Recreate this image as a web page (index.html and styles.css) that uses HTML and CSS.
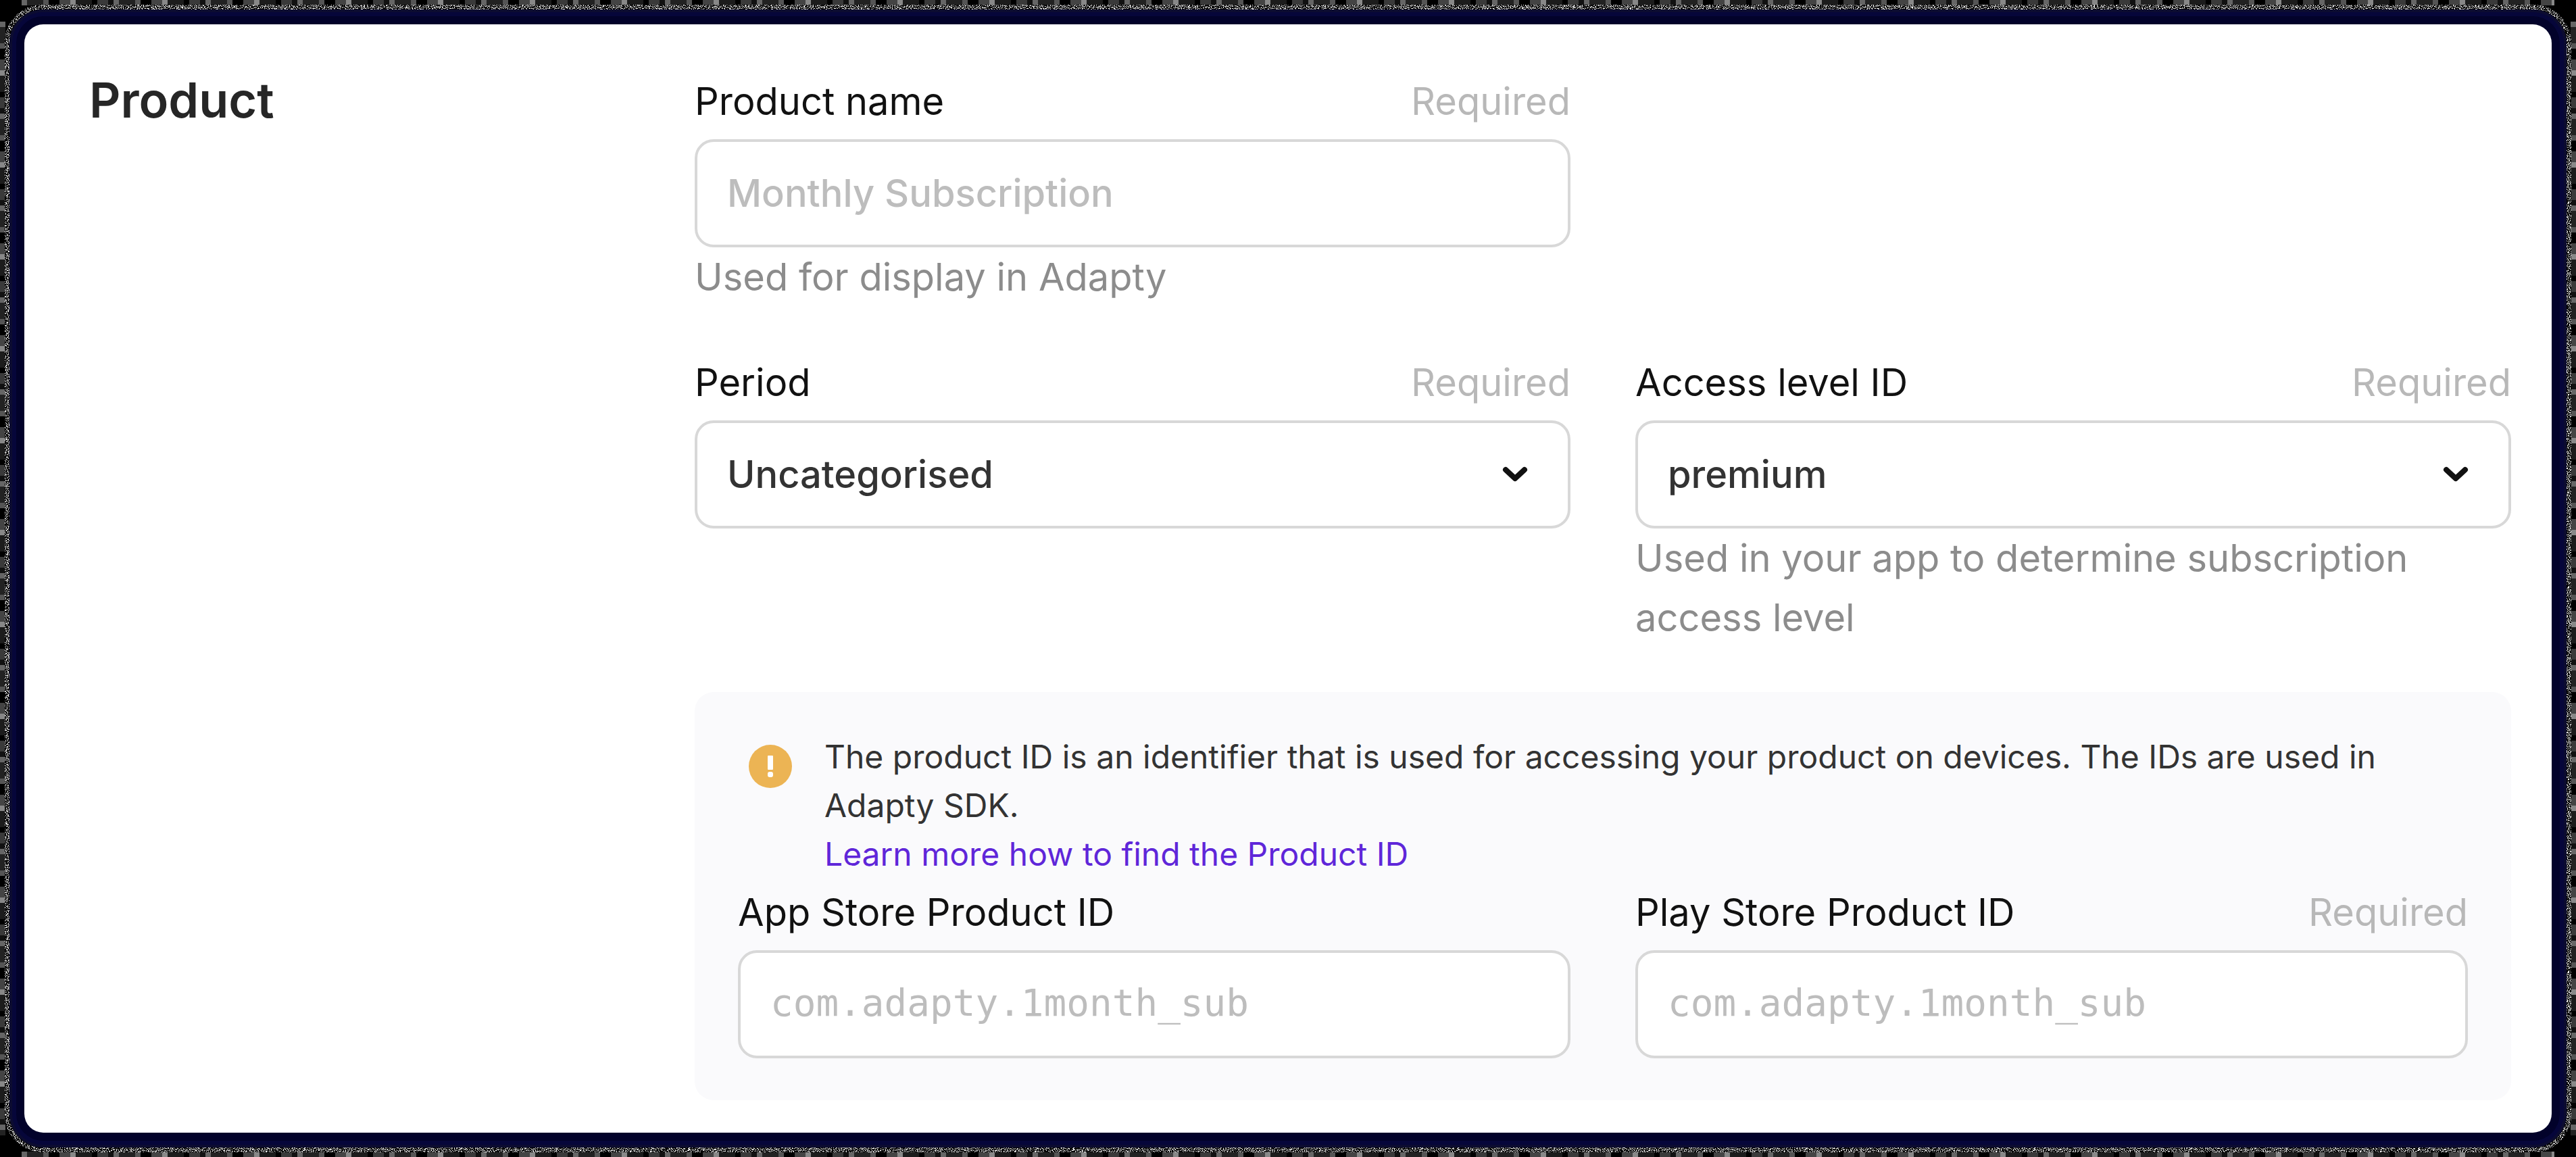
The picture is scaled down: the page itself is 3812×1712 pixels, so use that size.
FILE: index.html
```html
<!DOCTYPE html>
<html lang="en">
<head>
  <meta charset="utf-8">
  <title>Product</title>
  <link rel="stylesheet" href="styles.css">
</head>
<body>
  <svg class="defs" width="0" height="0" aria-hidden="true">
    <filter id="speckle" x="0" y="0" width="100%" height="100%" color-interpolation-filters="sRGB">
      <feTurbulence type="fractalNoise" baseFrequency="0.9" numOctaves="2" seed="4" result="noise"/>
      <feColorMatrix in="noise" type="matrix" values="9 0 0 0 -4.6  9 0 0 0 -4.6  9 0 0 0 -4.6  0 0 0 0 1" result="dots"/>
      <feComposite in="dots" in2="SourceAlpha" operator="in"/>
    </filter>
  </svg>
  <div class="grain" aria-hidden="true"></div>
  <main class="card">
    <h1 class="title">Product</h1>
    <form class="form">
      <div class="row">
        <div class="field">
          <div class="field-head">
            <label for="name">Product name</label>
            <span class="required">Required</span>
          </div>
          <input class="control" id="name" type="text" placeholder="Monthly Subscription">
          <p class="help">Used for display in Adapty</p>
        </div>
      </div>
      <div class="row">
        <div class="field">
          <div class="field-head">
            <label for="period">Period</label>
            <span class="required">Required</span>
          </div>
          <div class="select">
            <select class="control" id="period"><option>Uncategorised</option></select>
            <svg class="chevron" viewBox="0 0 40 40" aria-hidden="true"><path d="M6 13 20 26 34 13"/></svg>
          </div>
        </div>
        <div class="field">
          <div class="field-head">
            <label for="access">Access level ID</label>
            <span class="required">Required</span>
          </div>
          <div class="select">
            <select class="control" id="access"><option>premium</option></select>
            <svg class="chevron" viewBox="0 0 40 40" aria-hidden="true"><path d="M6 13 20 26 34 13"/></svg>
          </div>
          <p class="help">Used in your app to determine subscription access level</p>
        </div>
      </div>
      <section class="panel">
        <div class="note">
          <svg class="note-icon" viewBox="0 0 64 64" aria-hidden="true">
            <circle cx="32" cy="32" r="32" fill="#ecb454"/>
            <rect x="28" y="16" width="8" height="21" rx="1" fill="#fff"/>
            <rect x="28" y="40" width="8" height="8" rx="3" fill="#fff"/>
          </svg>
          <p class="note-text">The product ID is an identifier that is used for accessing your product on devices. The IDs are used in Adapty SDK.<br><a href="#">Learn more how to find the Product ID</a></p>
        </div>
        <div class="row">
          <div class="field">
            <div class="field-head">
              <label for="appstore">App Store Product ID</label>
            </div>
            <input class="control mono" id="appstore" type="text" placeholder="com.adapty.1month_sub">
          </div>
          <div class="field">
            <div class="field-head">
              <label for="playstore">Play Store Product ID</label>
              <span class="required">Required</span>
            </div>
            <input class="control mono" id="playstore" type="text" placeholder="com.adapty.1month_sub">
          </div>
        </div>
      </section>
    </form>
  </main>
</body>
</html>
```
FILE: styles.css
```css
* {
  box-sizing: border-box;
}

html {
  background: #000;
}

body {
  --blocks: #000 0 8px, #3a3a3a 8px 24px, #111 24px 32px, #666 32px 40px, #222 40px 64px, #555 64px 72px, #000 72px 88px, #444 88px 104px, #888 104px 112px, #1c1c1c 112px 136px;
  position: relative;
  margin: 0;
  padding: 36px;
  font-family: Inter, "Liberation Sans", sans-serif;
  font-size: 56px;
  line-height: 88px;
  color: #111;
  background:
    linear-gradient(#000, #000) 0 0 / 32px 32px no-repeat,
    linear-gradient(#000, #000) 100% 0 / 32px 32px no-repeat,
    linear-gradient(#000, #000) 0 100% / 32px 32px no-repeat,
    linear-gradient(#000, #000) 100% 100% / 32px 32px no-repeat,
    repeating-linear-gradient(90deg, var(--blocks)) 0 0 / 100% 8px no-repeat,
    repeating-linear-gradient(90deg, var(--blocks)) 0 100% / 100% 8px no-repeat,
    repeating-linear-gradient(var(--blocks)) 0 0 / 8px 100% no-repeat,
    repeating-linear-gradient(var(--blocks)) 100% 0 / 8px 100% no-repeat,
    #000;
}

.defs {
  position: absolute;
}

/* Speckled rim round the card's shadow */
.grain {
  position: absolute;
  inset: 7px;
  border: 7px solid #fff;
  border-radius: 56px;
  filter: url(#speckle);
}

.card {
  position: relative;
  display: grid;
  grid-template-columns: 1fr 3fr;
  padding: 70px 60px 48px 96px;
  border-radius: 28px;
  background: #fff;
  box-shadow: 0 0 0 12px #02022a, 0 0 0 18px #06063a, 0 0 0 22px #0c0c30;
}

.title {
  margin: 0;
  font-size: 72px;
  font-weight: 600;
  line-height: 84px;
  color: #262626;
}

.row {
  display: grid;
  grid-template-columns: 1fr 1fr;
  gap: 96px;
}

.form > .row + .row {
  margin-top: 68px;
}

.field {
  min-width: 0;
}

.field-head {
  display: flex;
  justify-content: space-between;
  margin-bottom: 12px;
}

.required {
  color: #b8b8b8;
}

.control {
  display: block;
  width: 100%;
  height: 160px;
  margin: 0;
  padding: 0 44px;
  border: 4px solid #d8d8d8;
  border-radius: 28px;
  background: #fff;
  font: inherit;
  font-weight: 500;
  color: #333;
  appearance: none;
}

.control::placeholder {
  color: #bdbdbd;
  opacity: 1;
}

.mono {
  padding-bottom: 6px;
  font-family: "DejaVu Sans Mono", monospace;
  font-weight: 400;
}

.select {
  position: relative;
}

.chevron {
  position: absolute;
  top: 60px;
  right: 62px;
  width: 40px;
  height: 40px;
  fill: none;
  stroke: #111;
  stroke-width: 8px;
  stroke-linecap: round;
  stroke-linejoin: round;
  pointer-events: none;
}

.help {
  margin: 0;
  color: #8c8c8c;
}

.panel {
  margin-top: 66px;
  padding: 60px 64px 62px;
  border-radius: 28px;
  background: #fafafc;
}

.note {
  display: flex;
  gap: 48px;
  margin-bottom: 6px;
  padding-left: 16px;
}

.note-icon {
  flex: none;
  width: 64px;
  height: 64px;
  margin-top: 18px;
}

.note-text {
  margin: 0;
  font-size: 48px;
  line-height: 72px;
  color: #333;
}

.note-text a {
  color: #5f26d9;
  text-decoration: none;
}
```
